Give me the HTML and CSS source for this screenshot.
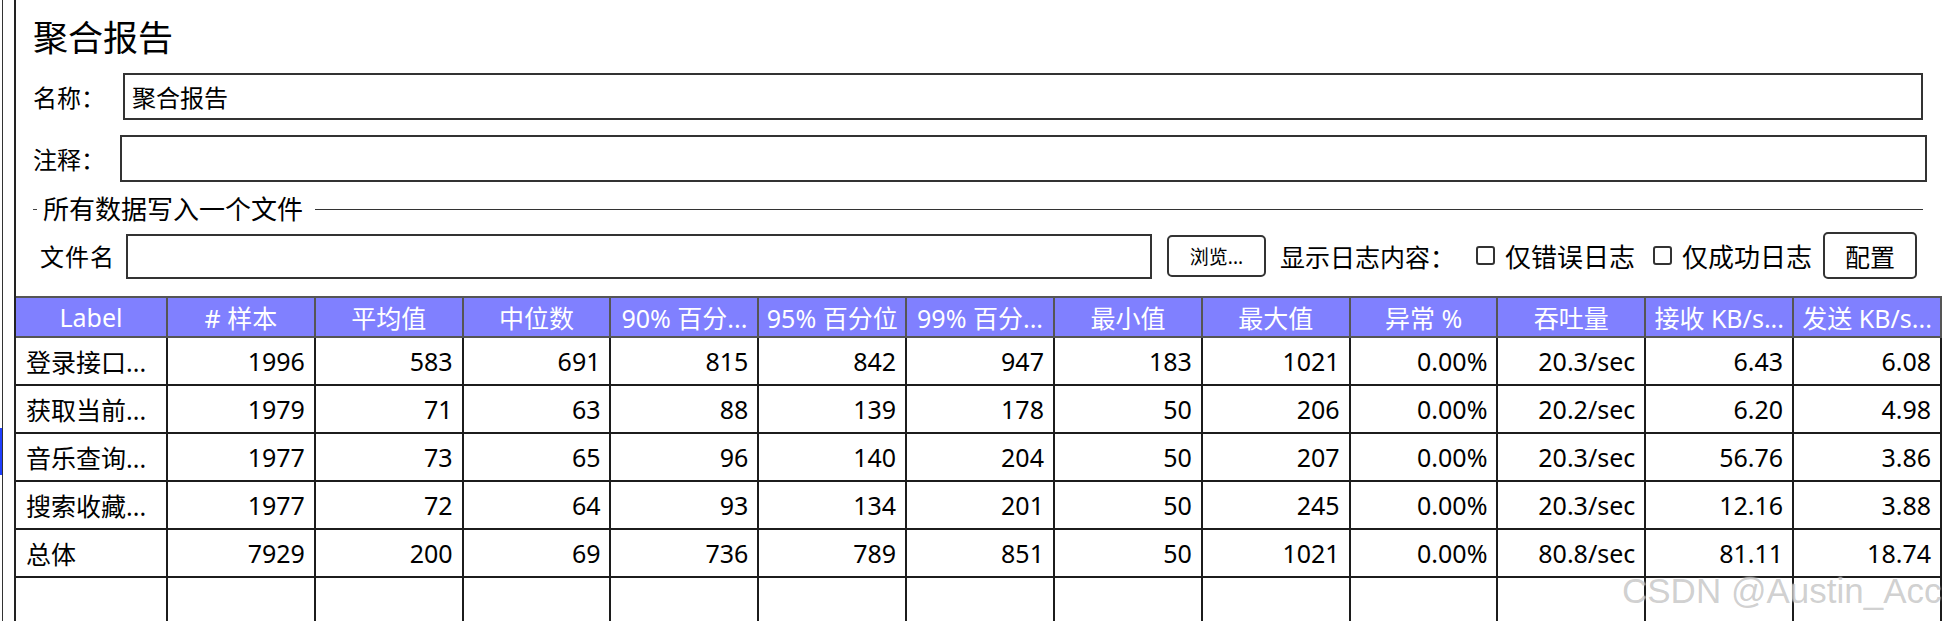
FILE: index.html
```html
<!DOCTYPE html>
<html lang="zh-CN">
  <head>
    <meta charset="UTF-8" />
    <title>聚合报告</title>
    <link rel="stylesheet" href="styles.css">
  </head>
  <body>
    <div class="screen">
      <div class="tree"><div class="tree-sel"></div></div>
      <div class="tree-edge"></div>
      <div class="gap"></div>
      <div class="panel">
        <div class="form">
          <h1 class="title">聚合报告</h1>
          <div class="field">
            <label class="name-label">名称：</label>
            <input type="text" class="text-input name-input" value="聚合报告" />
          </div>
          <div class="field comment-field">
            <label class="comment-label">注释：</label>
            <input type="text" class="text-input" value="" />
          </div>
          <div class="group-title">
            <span class="dash"></span>
            <span>所有数据写入一个文件</span>
            <span class="rule"></span>
          </div>
          <div class="file-row">
            <label class="file-label">文件名</label>
            <input type="text" class="text-input file-input" value="" />
            <button class="browse-btn">浏览...</button>
            <span class="log-label">显示日志内容：</span>
            <span class="check first-check"></span>
            <span class="check-text">仅错误日志</span>
            <span class="check second-check"></span>
            <span class="check-text">仅成功日志</span>
            <button class="config-btn">配置</button>
          </div>
        </div>
        <table class="report">
          <thead>
            <tr>
              <th class="label-col">Label</th>
              <th># 样本</th>
              <th>平均值</th>
              <th>中位数</th>
              <th>90% 百分...</th>
              <th>95% 百分位</th>
              <th>99% 百分...</th>
              <th>最小值</th>
              <th>最大值</th>
              <th>异常 %</th>
              <th>吞吐量</th>
              <th>接收 KB/s...</th>
              <th>发送 KB/s...</th>
            </tr>
          </thead>
          <tbody>
            <tr>
              <td class="label">登录接口...</td>
              <td>1996</td><td>583</td><td>691</td><td>815</td><td>842</td><td>947</td>
              <td>183</td><td>1021</td><td>0.00%</td><td>20.3/sec</td><td>6.43</td><td>6.08</td>
            </tr>
            <tr>
              <td class="label">获取当前...</td>
              <td>1979</td><td>71</td><td>63</td><td>88</td><td>139</td><td>178</td>
              <td>50</td><td>206</td><td>0.00%</td><td>20.2/sec</td><td>6.20</td><td>4.98</td>
            </tr>
            <tr>
              <td class="label">音乐查询...</td>
              <td>1977</td><td>73</td><td>65</td><td>96</td><td>140</td><td>204</td>
              <td>50</td><td>207</td><td>0.00%</td><td>20.3/sec</td><td>56.76</td><td>3.86</td>
            </tr>
            <tr>
              <td class="label">搜索收藏...</td>
              <td>1977</td><td>72</td><td>64</td><td>93</td><td>134</td><td>201</td>
              <td>50</td><td>245</td><td>0.00%</td><td>20.3/sec</td><td>12.16</td><td>3.88</td>
            </tr>
            <tr>
              <td class="label">总体</td>
              <td>7929</td><td>200</td><td>69</td><td>736</td><td>789</td><td>851</td>
              <td>50</td><td>1021</td><td>0.00%</td><td>80.8/sec</td><td>81.11</td><td>18.74</td>
            </tr>
            <tr>
              <td></td><td></td><td></td><td></td><td></td><td></td><td></td>
              <td></td><td></td><td></td><td></td><td></td><td></td>
            </tr>
          </tbody>
        </table>
      </div>
      <div class="watermark">CSDN @Austin_Acc</div>
    </div>
  </body>
</html>
```

FILE: styles.css
```css
html,
body {
  margin: 0;
  background: #fff;
}
body {
  font-family: "Noto Sans", "Noto Sans CJK SC", sans-serif;
  color: #000;
  overflow: hidden;
}
.screen {
  display: flex;
  height: 621px;
  position: relative;
  overflow: hidden;
}
.tree {
  width: 2px;
  padding-top: 428px;
  box-sizing: border-box;
}
.tree-sel {
  height: 47px;
  background: #1f3fff;
}
.tree-edge {
  width: 1px;
  background: #333;
}
.gap {
  width: 11px;
}
.panel {
  flex: 1;
  min-width: 0;
  border-left: 2px solid #222;
  display: flex;
  flex-direction: column;
}
.form {
  padding: 20px 15px 17px 17px;
}
.title {
  margin: 0 0 17px 0;
  font-size: 35px;
  line-height: 36px;
  font-weight: normal;
}
.field {
  display: flex;
  align-items: center;
  height: 47px;
  font-size: 24px;
}
.comment-field {
  margin-top: 15px;
}
.name-label {
  width: 90px;
}
.comment-label {
  width: 87px;
}
.text-input {
  flex: 1;
  height: 47px;
  box-sizing: border-box;
  border: 2px solid #333;
  padding: 0 7px;
  font-family: inherit;
  font-size: 24px;
  color: #000;
  outline: none;
}
.name-input {
  margin-right: 4px;
}
.group-title {
  display: flex;
  align-items: center;
  margin-top: 12px;
  margin-right: 4px;
  height: 30px;
  font-size: 26px;
  line-height: 30px;
}
.dash {
  width: 4px;
  height: 1px;
  background: #444;
  margin-right: 6px;
}
.rule {
  flex: 1;
  height: 1px;
  background: #333;
  margin-left: 12px;
}
.file-row {
  display: flex;
  align-items: center;
  margin-top: 8px;
  height: 47px;
  font-size: 25px;
}
.file-label {
  width: 86px;
  padding-left: 7px;
  font-size: 24px;
  letter-spacing: 1px;
}
.file-input {
  flex: none;
  width: 1026px;
  height: 45px;
  margin-top: 2px;
}
.browse-btn,
.config-btn {
  background: #fff;
  border: 2px solid #333;
  border-radius: 5px;
  font-family: inherit;
  color: #000;
  padding: 0;
  cursor: pointer;
}
.browse-btn {
  width: 99px;
  height: 42px;
  margin-left: 15px;
  font-size: 19px;
}
.log-label {
  margin-left: 14px;
  font-size: 25px;
}
.check {
  width: 19px;
  height: 19px;
  box-sizing: border-box;
  border: 2px solid #333;
  border-radius: 3px;
}
.first-check {
  margin-left: 21px;
}
.second-check {
  margin-left: 18px;
}
.check-text {
  margin-left: 10px;
  font-size: 26px;
}
.config-btn {
  width: 94px;
  height: 47px;
  margin-left: 11px;
  font-size: 25px;
}
.report {
  width: 100%;
  table-layout: fixed;
  border-collapse: separate;
  border-spacing: 0;
  font-size: 25px;
}
.report th {
  background: #8080ff;
  color: #fff;
  font-weight: normal;
  height: 38px;
  padding: 0;
  border-top: 2px solid #555;
  border-bottom: 2px solid #555;
  border-right: 2px solid #555;
  text-align: center;
  white-space: nowrap;
  overflow: hidden;
}
.report th.label-col {
  width: 150px;
}
.report td {
  height: 46px;
  padding: 0 9px 0 10px;
  border-bottom: 2px solid #1c1c1c;
  border-right: 2px solid #1c1c1c;
  text-align: right;
  white-space: nowrap;
  overflow: hidden;
}
.report td.label {
  text-align: left;
}
.watermark {
  position: absolute;
  left: 1622px;
  top: 571px;
  font-family: "Liberation Sans", sans-serif;
  font-size: 35px;
  color: rgba(150, 150, 150, 0.45);
  text-shadow: 0 0 2px rgba(255, 255, 255, 0.9);
  white-space: nowrap;
}
```
